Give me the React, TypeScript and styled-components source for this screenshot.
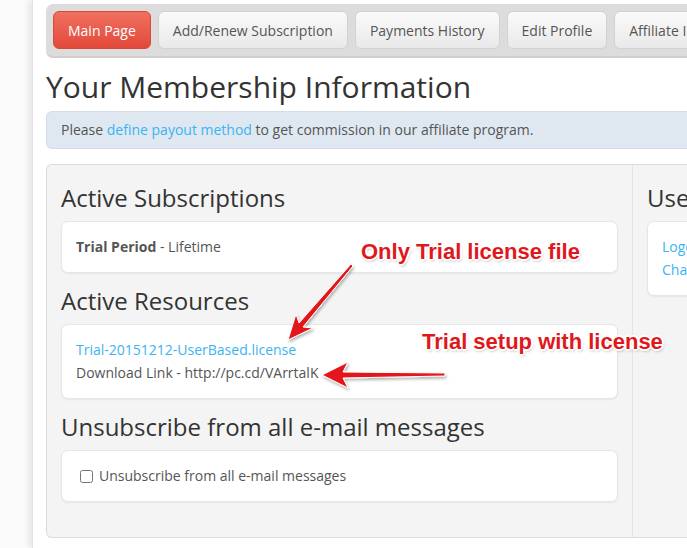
import { FC } from "react";
import styled, { createGlobalStyle, css } from "styled-components";

const GlobalStyle = createGlobalStyle`
    html, body {
        margin: 0;
        padding: 0;
        background: #fbfbfb;
        overflow: hidden;
        font-family: "Open Sans", "DejaVu Sans", sans-serif;
        color: #555;
        font-size: 14px;
    }
`;

const Page = styled.div`
    position: relative;
    width: 687px;
    height: 548px;
    overflow: hidden;
`;

const Content = styled.div`
    margin-left: 32px;
    width: 1100px;
    min-height: 548px;
    background: #fff;
    padding: 4px 0 0 13px;
    box-sizing: border-box;
    border-left: 1px solid #e2e2e2;
    box-shadow: -4px 0 6px rgba(0, 0, 0, 0.08);
`;

const NavBar = styled.nav`
    display: flex;
    gap: 7px;
    padding: 7px;
    background: #dcdcdc;
    border-bottom: 2px solid #cfcfcf;
    border-radius: 7px 0 0 7px;
`;

const NavButton = styled.a<{ active?: boolean }>`
    display: flex;
    align-items: center;
    height: 38px;
    box-sizing: border-box;
    padding: 0 14px;
    border: 1px solid #d2d2d2;
    border-radius: 6px;
    background: linear-gradient(#fafafa, #e9e9e9);
    color: #555;
    font-size: 14px;
    white-space: nowrap;
    ${props => props.active && css`
        background: linear-gradient(#f0705f, #e2493a);
        border-color: #d9493b;
        color: #fff;
    `}
`;

const Title = styled.h1`
    margin: 12px 0 8px;
    font-size: 30px;
    font-weight: 400;
    line-height: 33px;
    color: #333;
`;

const Alert = styled.div`
    padding: 8px 14px;
    line-height: 20px;
    background: #dfe8f1;
    border: 1px solid #d3dde8;
    border-right: none;
    border-radius: 6px 0 0 6px;
    color: #555;
`;

const Link = styled.a`
    color: #3bb4f2;
    text-decoration: none;
`;

const Panel = styled.div`
    display: grid;
    grid-template-columns: 585px 1fr;
    margin-top: 15px;
    height: 374px;
    box-sizing: border-box;
    background: #f4f4f4;
    border: 1px solid #dcdcdc;
    border-right: none;
    border-radius: 6px 0 0 6px;
`;

const Column = styled.div<{ side?: boolean }>`
    padding: 20px 14px 0;
    ${props => props.side && css`
        border-left: 1px solid #e3e3e3;
    `}
`;

const Heading = styled.h2`
    margin: 0 0 10px;
    font-size: 24px;
    font-weight: 400;
    line-height: 26px;
    color: #333;
`;

const Card = styled.div`
    margin-bottom: 15px;
    padding: 15px 14px;
    line-height: 20px;
    background: #fff;
    border: 1px solid #e6e6e6;
    border-radius: 7px;
    box-shadow: 0 1px 2px rgba(0, 0, 0, 0.06);
`;

const Line = styled.div`
    & + & {
        margin-top: 3px;
    }
`;

const Strong = styled.b`
    font-weight: 700;
`;

const CheckLabel = styled.label`
    display: flex;
    align-items: center;
    font-size: 14px;

    input {
        margin: 0 6px 0 4px;
        width: 13px;
        height: 13px;
    }
`;

const Callout = styled.div<{ x: number; y: number }>`
    position: absolute;
    left: ${p => p.x}px;
    top: ${p => p.y}px;
    font-family: "Liberation Sans", Arial, sans-serif;
    font-weight: 700;
    font-size: 22px;
    line-height: 22px;
    color: #e0181c;
    white-space: nowrap;
    text-shadow:
        -1px -1px 0 #fff, 1px -1px 0 #fff, -1px 1px 0 #fff, 1px 1px 0 #fff,
        0 -2px 0 #fff, 0 2px 0 #fff, -2px 0 0 #fff, 2px 0 0 #fff,
        1px 2px 3px rgba(0, 0, 0, 0.35);
`;

const Arrows = styled.svg`
    position: absolute;
    left: 0;
    top: 0;
    pointer-events: none;
`;

const navItems = ["Main Page", "Add/Renew Subscription", "Payments History", "Edit Profile", "Affiliate Info"];

export const App: FC = () => {
    return (
        <Page>
            <GlobalStyle />
            <Content>
                <NavBar>
                    {navItems.map((item, i) => (
                        <NavButton key={item} active={i === 0}>{item}</NavButton>
                    ))}
                </NavBar>
                <Title>Your Membership Information</Title>
                <Alert>
                    Please <Link>define payout method</Link> to get commission in our affiliate program.
                </Alert>
                <Panel>
                    <Column>
                        <Heading>Active Subscriptions</Heading>
                        <Card>
                            <Strong>Trial Period</Strong> - Lifetime
                        </Card>
                        <Heading>Active Resources</Heading>
                        <Card>
                            <Line><Link>Trial-20151212-UserBased.license</Link></Line>
                            <Line>Download Link - http://pc.cd/VArrtalK</Line>
                        </Card>
                        <Heading>Unsubscribe from all e-mail messages</Heading>
                        <Card>
                            <CheckLabel>
                                <input type="checkbox" />
                                Unsubscribe from all e-mail messages
                            </CheckLabel>
                        </Card>
                    </Column>
                    <Column side>
                        <Heading>User Menu</Heading>
                        <Card>
                            <Line><Link>Logout</Link></Line>
                            <Line><Link>Change Password</Link></Line>
                        </Card>
                    </Column>
                </Panel>
            </Content>

            <Arrows width="687" height="548" viewBox="0 0 687 548">
                <defs>
                    <filter id="sh" x="-20%" y="-20%" width="140%" height="140%">
                        <feDropShadow dx="1" dy="2" stdDeviation="1.5" floodColor="#000" floodOpacity="0.3" />
                    </filter>
                </defs>
                <g fill="#e3191b" stroke="#fff" strokeWidth="1" filter="url(#sh)">
                    <polygon points="353,266 303,327 313,328 288,340 296,314 299,323 351,264" />
                    <polygon points="445,373 343,372 348,362 322,375 348,388 343,378 445,376" />
                </g>
            </Arrows>
            <Callout x={361} y={241}>Only Trial license file</Callout>
            <Callout x={422} y={331}>Trial setup with license</Callout>
        </Page>
    );
};

export default App;
